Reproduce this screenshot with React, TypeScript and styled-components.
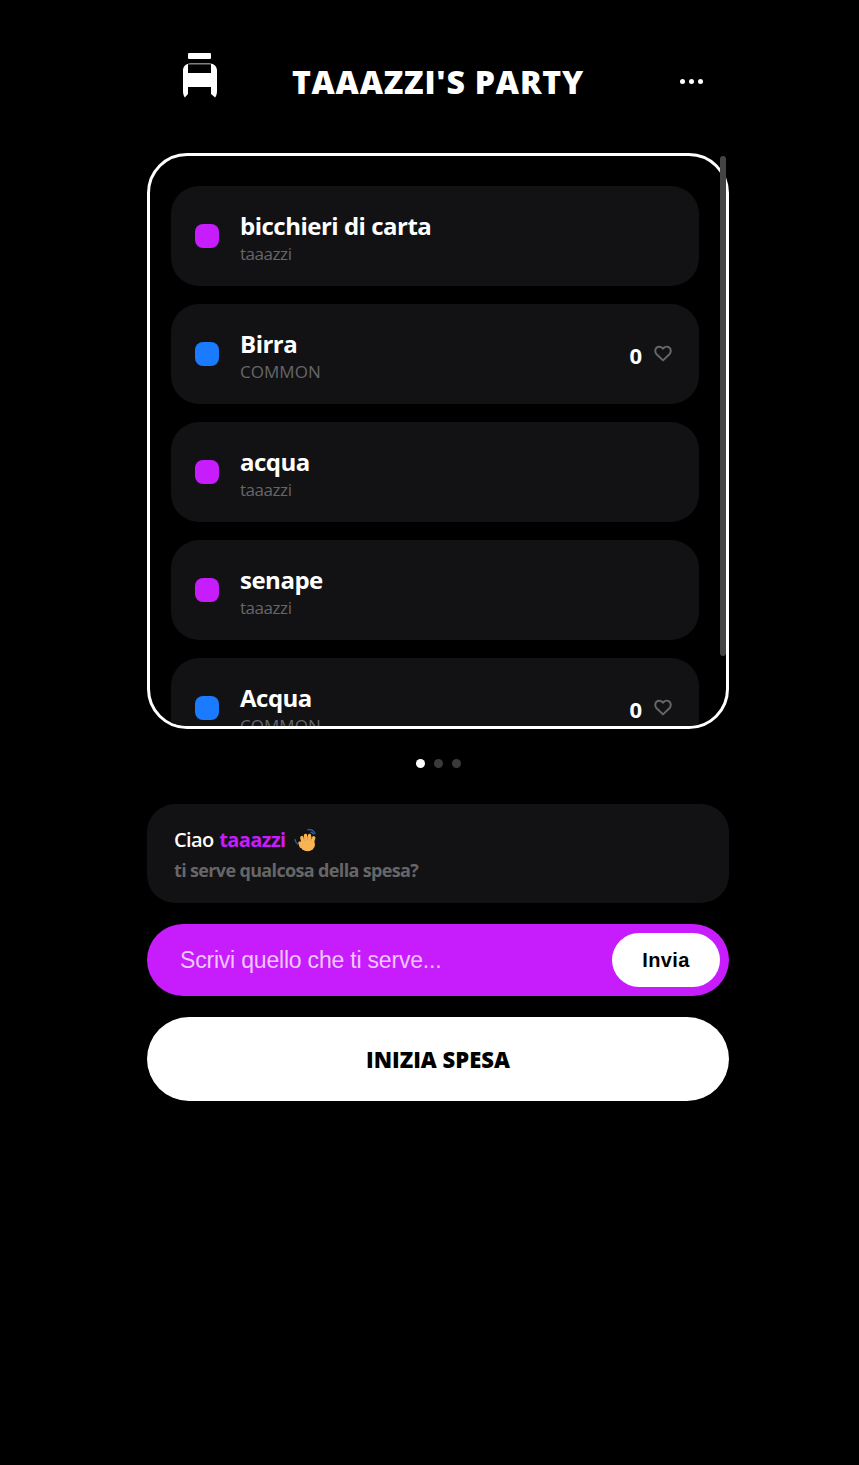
import React from 'react';
import styled, { createGlobalStyle } from 'styled-components';

const PURPLE = '#c71dfd';
const BLUE = '#1a7bff';
const CARD = '#121214';
const MUTED = '#666668';
const UI_FONT = '"Open Sans", "Noto Sans", sans-serif';

interface Item {
  id: number;
  name: string;
  owner: string;
  common?: boolean;
}

const items: Item[] = [
  { id: 1, name: 'bicchieri di carta', owner: 'taaazzi' },
  { id: 2, name: 'Birra', owner: 'COMMON', common: true },
  { id: 3, name: 'acqua', owner: 'taaazzi' },
  { id: 4, name: 'senape', owner: 'taaazzi' },
  { id: 5, name: 'Acqua', owner: 'COMMON', common: true },
];

const GlobalStyle = createGlobalStyle`
  html, body {
    margin: 0;
    padding: 0;
    background: #000;
    min-height: 100%;
  }
  * {
    box-sizing: border-box;
  }
`;

const CartIcon = () => (
  <CartSvg width="34" height="45" viewBox="0 0 34 45" fill="#fff">
    <rect x="5" y="0" width="23" height="6" rx="1" />
    <path
      fillRule="evenodd"
      d="M7 10.500h20c4 0 7 3 7 7V38c0 2.500-.5 4.700-1.800 6.500L28 41V34H5v7L1.800 44.500C.5 42.700 0 40.500 0 38V17.500c0-4 3-7 7-7zM5 11.200V20h23v-8.800z"
    />
  </CartSvg>
);

const HeartIcon = () => (
  <HeartSvg width="18" height="17" viewBox="0 0 18 17" fill="none" stroke={MUTED} strokeWidth="2" strokeLinejoin="round">
    <path d="M9 15.400 2.600 9.200C.8 7.300.8 4.400 2.500 2.800c1.700-1.600 4.300-1.500 5.900.2l.6.7.6-.7c1.600-1.700 4.200-1.800 5.900-.2 1.700 1.600 1.700 4.500-.1 6.400z" />
  </HeartSvg>
);

// waving hand, fingers drawn as thick round strokes over the palm
const WaveIcon = () => (
  <svg width="24" height="24" viewBox="0 0 24 24" fill="none" strokeLinecap="round">
    <ellipse cx="13.500" cy="16.500" rx="7.500" ry="6.800" fill="#f8b452" />
    <path d="M9 14.500 7.800 9.500M12 12.500 11.500 7.500M15.200 12.500l.3-5M18.300 14.500l1.500-4.800" stroke="#f8b452" strokeWidth="3.300" />
    <path d="M7 18.500 5.800 15" stroke="#f8b452" strokeWidth="3" />
    <path d="M9.800 9.500l.6 3M13.500 8.500l.1 3.500M17.600 9l-.8 3.500" stroke="#dc9434" strokeWidth=".7" />
    <path d="M1 11.500c.2 2 1.100 3.400 2.600 4.500M14 1.800c3-.6 5.800.8 7 3.800M17 4.200c1 .2 1.900.8 2.400 1.800" stroke="#2b5f9c" strokeWidth="1.400" />
  </svg>
);

export default function App() {
  return (
    <>
      <GlobalStyle />
      <Page>
        <Header>
          <CartIcon />
          <Title>TAAAZZI'S PARTY</Title>
          <MenuDots>
            <Dot />
            <Dot />
            <Dot />
          </MenuDots>
        </Header>

        <PanelFrame>
          <ListPanel>
            {items.map((item) => (
              <ItemCard key={item.id}>
                <Swatch $common={item.common} />
                <ItemText>
                  <ItemName>{item.name}</ItemName>
                  <ItemOwner $common={item.common}>{item.owner}</ItemOwner>
                </ItemText>
                {item.common && (
                  <Likes>
                    <LikeCount>0</LikeCount>
                    <HeartIcon />
                  </Likes>
                )}
              </ItemCard>
            ))}
          </ListPanel>
          <ScrollThumb />
        </PanelFrame>

        <Pager>
          <PagerDot $active />
          <PagerDot />
          <PagerDot />
        </Pager>

        <Greeting>
          <Hello>
            <span>
              Ciao <UserName>taaazzi</UserName>
            </span>
            <WaveIcon />
          </Hello>
          <Question>ti serve qualcosa della spesa?</Question>
        </Greeting>

        <RequestForm onSubmit={(e) => e.preventDefault()}>
          <RequestInput placeholder="Scrivi quello che ti serve..." />
          <SendButton type="submit">Invia</SendButton>
        </RequestForm>

        <StartButton type="button">INIZIA SPESA</StartButton>
      </Page>
    </>
  );
}

const Page = styled.div`
  width: 582px;
  margin-left: 147px;
  padding-top: 53px;
  min-height: 1465px;
  display: flex;
  flex-direction: column;
  font-family: ${UI_FONT};
`;

const Header = styled.header`
  height: 58px;
  display: grid;
  grid-template-columns: 106px 1fr 106px;
  align-items: center;
  margin-bottom: 42px;
`;

const CartSvg = styled.svg`
  align-self: start;
  margin-left: 36px;
`;

const HeartSvg = styled.svg`
  margin-bottom: 2px;
`;

const Title = styled.h1`
  margin: 0;
  text-align: center;
  color: #fff;
  font-size: 32px;
  font-weight: 800;
  line-height: 58px;
  letter-spacing: 0.8px;
  white-space: nowrap;
`;

const MenuDots = styled.div`
  display: flex;
  justify-content: flex-end;
  gap: 4px;
  padding: 0 26px 2px 0;
`;

const Dot = styled.span`
  width: 5px;
  height: 5px;
  border-radius: 50%;
  background: #fff;
`;

const PanelFrame = styled.div`
  position: relative;
`;

const ListPanel = styled.section`
  height: 576px;
  border: 3px solid #fff;
  border-radius: 40px;
  padding: 30px 21px 48px;
  display: flex;
  flex-direction: column;
  gap: 18px;
  overflow: hidden;
`;

const ScrollThumb = styled.div`
  position: absolute;
  top: 3px;
  right: 3px;
  width: 6px;
  height: 500px;
  background: #444;
  border-radius: 3px;
`;

const ItemCard = styled.article`
  flex: none;
  width: 528px;
  height: 100px;
  background: ${CARD};
  border-radius: 28px;
  padding: 0 27px 0 24px;
  display: flex;
  align-items: center;
`;

const Swatch = styled.span<{ $common?: boolean }>`
  flex: none;
  width: 24px;
  height: 24px;
  border-radius: 8px;
  background: ${(props) => (props.$common ? BLUE : PURPLE)};
`;

const ItemText = styled.div`
  margin: 3px 0 0 21px;
  flex: 1;
  display: flex;
  flex-direction: column;
`;

const ItemName = styled.div`
  color: #fff;
  font-size: 24px;
  font-weight: 700;
  line-height: 32px;
  letter-spacing: -0.5px;
`;

const ItemOwner = styled.div<{ $common?: boolean }>`
  color: ${MUTED};
  font-size: 17px;
  line-height: 22px;
  margin-top: 1px;
  letter-spacing: ${(props) => (props.$common ? '0.05px' : '-0.45px')};
`;

const Likes = styled.div`
  display: flex;
  align-items: center;
  gap: 12px;
`;

const LikeCount = styled.span`
  color: #fff;
  font-size: 22px;
  font-weight: 700;
  line-height: 26px;
  margin-top: 1px;
`;

const Pager = styled.div`
  display: flex;
  justify-content: center;
  gap: 9px;
  margin-top: 30px;
`;

const PagerDot = styled.span<{ $active?: boolean }>`
  width: 9px;
  height: 9px;
  border-radius: 50%;
  background: ${(props) => (props.$active ? '#fff' : '#3a3a3a')};
`;

const Greeting = styled.section`
  margin-top: 36px;
  height: 99px;
  background: ${CARD};
  border-radius: 28px;
  padding: 22px 27px 0;
`;

const Hello = styled.div`
  color: #fff;
  font-size: 20px;
  font-weight: 600;
  line-height: 28px;
  letter-spacing: -0.6px;
  word-spacing: 1px;
  display: flex;
  align-items: center;
  gap: 8px;
  height: 28px;
`;

const UserName = styled.span`
  color: ${PURPLE};
  font-weight: 700;
`;

const Question = styled.div`
  color: ${MUTED};
  font-size: 18px;
  font-weight: 700;
  line-height: 32px;
  letter-spacing: -0.65px;
`;

const RequestForm = styled.form`
  margin-top: 21px;
  height: 72px;
  border-radius: 36px;
  background: ${PURPLE};
  display: flex;
  align-items: center;
  padding: 0 9px 0 33px;
`;

const RequestInput = styled.input`
  flex: 1;
  min-width: 0;
  padding: 0;
  border: 0;
  outline: 0;
  background: transparent;
  color: #fff;
  font-family: "Liberation Sans", sans-serif;
  font-size: 23px;
  letter-spacing: -0.2px;

  &::placeholder {
    color: rgba(255, 255, 255, 0.75);
  }
`;

const SendButton = styled.button`
  width: 108px;
  height: 54px;
  border: 0;
  border-radius: 27px;
  background: #fff;
  color: #000;
  font-family: "Liberation Sans", sans-serif;
  font-size: 20px;
  font-weight: 700;
  letter-spacing: 0.4px;
`;

const StartButton = styled.button`
  margin-top: 21px;
  height: 84px;
  padding: 0;
  border: 0;
  border-radius: 42px;
  background: #fff;
  color: #000;
  font-family: ${UI_FONT};
  font-size: 22px;
  font-weight: 800;
`;
